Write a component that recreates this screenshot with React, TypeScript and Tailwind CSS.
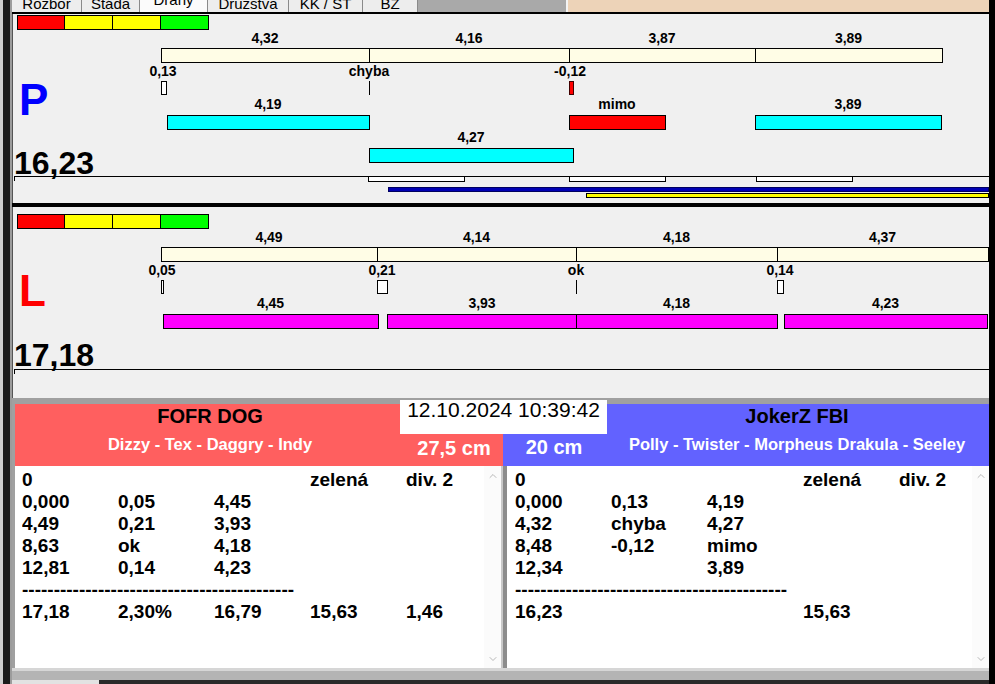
import React from "react";
import { ChevronUp, ChevronDown } from "lucide-react";

// page x of the lane panel's inner left edge
const OX = 13;

type Seg = [number, number];
type Label = { x: number; text: string };
type Marker = { x1: number; x2: number; kind: "box" | "line" | "red" };
type Run = { x1: number; x2: number; color: string; label: string; top: number };

interface Lane {
  letter: string;
  letterColor: string;
  total: string;
  dy: number;
  cream: Seg[];
  creamLabels: string[];
  passLabels: Label[];
  markers: Marker[];
  runs: Run[];
  letterTop: number;
  totalTop: number;
  extras: boolean;
}

const lanes: Lane[] = [
  {
    letter: "P",
    letterColor: "#0000ff",
    total: "16,23",
    dy: 0,
    cream: [
      [161, 369],
      [369, 569],
      [569, 755],
      [755, 942],
    ],
    creamLabels: ["4,32", "4,16", "3,87", "3,89"],
    passLabels: [
      { x: 163, text: "0,13" },
      { x: 369, text: "chyba" },
      { x: 570, text: "-0,12" },
    ],
    markers: [
      { x1: 161, x2: 167, kind: "box" },
      { x1: 369, x2: 370, kind: "line" },
      { x1: 569, x2: 574, kind: "red" },
    ],
    runs: [
      { x1: 167, x2: 369, color: "bg-[#00ffff]", label: "4,19", top: 101 },
      { x1: 569, x2: 665, color: "bg-[#ff0000]", label: "mimo", top: 101 },
      { x1: 755, x2: 941, color: "bg-[#00ffff]", label: "3,89", top: 101 },
      { x1: 369, x2: 573, color: "bg-[#00ffff]", label: "4,27", top: 134 },
    ],
    letterTop: 64,
    totalTop: 133,
    extras: true,
  },
  {
    letter: "L",
    letterColor: "#ff0000",
    total: "17,18",
    dy: 6,
    cream: [
      [161, 377],
      [377, 576],
      [576, 777],
      [777, 988],
    ],
    creamLabels: ["4,49", "4,14", "4,18", "4,37"],
    passLabels: [
      { x: 162, text: "0,05" },
      { x: 382, text: "0,21" },
      { x: 576, text: "ok" },
      { x: 780, text: "0,14" },
    ],
    markers: [
      { x1: 161, x2: 164, kind: "box" },
      { x1: 377, x2: 388, kind: "box" },
      { x1: 576, x2: 577, kind: "line" },
      { x1: 777, x2: 784, kind: "box" },
    ],
    runs: [
      { x1: 163, x2: 378, color: "bg-[#ff00ff]", label: "4,45", top: 101 },
      { x1: 387, x2: 577, color: "bg-[#ff00ff]", label: "3,93", top: 101 },
      { x1: 576, x2: 777, color: "bg-[#ff00ff]", label: "4,18", top: 101 },
      { x1: 784, x2: 987, color: "bg-[#ff00ff]", label: "4,23", top: 101 },
    ],
    letterTop: 62,
    totalTop: 132,
    extras: false,
  },
];

function SmallLabel({ x, center, text }: { x: number; center: number; text: string }) {
  return (
    <div
      className="absolute -translate-x-1/2 whitespace-nowrap text-[14px] font-bold leading-[14px] text-black"
      style={{ left: x - OX, top: center - 7 }}
    >
      {text}
    </div>
  );
}

function LanePanel({ lane, height }: { lane: Lane; height: number }) {
  const d = lane.dy;
  return (
    <div className="relative border-l border-[#555555] bg-[#f0f0f0]" style={{ height }}>
      {/* traffic light bar */}
      <div className="absolute left-[4px] flex border border-black" style={{ top: 1 + d }}>
        <div className="h-[13px] w-[47px] border-r border-black bg-[#ff0000]" />
        <div className="h-[13px] w-[48px] border-r border-black bg-[#ffff00]" />
        <div className="h-[13px] w-[48px] border-r border-black bg-[#ffff00]" />
        <div className="h-[13px] w-[47px] bg-[#00ff00]" />
      </div>

      {/* split times */}
      {lane.cream.map(([a, b], i) => (
        <React.Fragment key={"c" + i}>
          <div
            className="absolute h-[15px] border border-black bg-[#fffde6]"
            style={{ left: a - OX, width: b - a + 1, top: 34 + d }}
          />
          <SmallLabel x={(a + b) / 2} center={24 + d} text={lane.creamLabels[i]} />
        </React.Fragment>
      ))}

      {/* passes */}
      {lane.passLabels.map((l, i) => (
        <SmallLabel key={"p" + i} x={l.x} center={57 + d} text={l.text} />
      ))}
      {lane.markers.map((m, i) =>
        m.kind === "line" ? (
          <div
            key={"m" + i}
            className="absolute h-[14px] w-px bg-black"
            style={{ left: m.x1 - OX, top: 67 + d }}
          />
        ) : (
          <div
            key={"m" + i}
            className={`absolute h-[14px] border ${
              m.kind === "red" ? "border-[#400000] bg-[#ff0000]" : "border-black bg-white"
            }`}
            style={{ left: m.x1 - OX, width: m.x2 - m.x1, top: 67 + d }}
          />
        )
      )}

      {/* dog runs */}
      {lane.runs.map((r, i) => (
        <React.Fragment key={"r" + i}>
          <div
            className={`absolute h-[15px] border border-black ${r.color}`}
            style={{ left: r.x1 - OX, width: r.x2 - r.x1 + 1, top: r.top + d }}
          />
          <SmallLabel x={(r.x1 + r.x2) / 2} center={r.top + d - 11} text={r.label} />
        </React.Fragment>
      ))}

      <div
        className="absolute left-[6px] text-[44px] font-bold leading-none"
        style={{ top: lane.letterTop, color: lane.letterColor }}
      >
        {lane.letter}
      </div>
      <div className="absolute left-[1px] text-[32px] font-bold leading-none text-black" style={{ top: lane.totalTop }}>
        {lane.total}
      </div>

      {/* time line */}
      <div className="absolute left-[1px] right-0 top-[162px] h-px bg-black" />
      <div className="absolute left-[1px] top-[162px] h-[5px] w-px bg-black" />

      {lane.extras && (
        <>
          {[
            [368, 464],
            [569, 665],
            [756, 852],
          ].map(([a, b], i) => (
            <div
              key={"w" + i}
              className="absolute h-[6px] border border-black bg-white"
              style={{ left: a - OX, width: b - a + 1, top: 162 }}
            />
          ))}
          <div className="absolute right-0 top-[173px] h-[5px] border border-[#000060] bg-[#0000b4]" style={{ left: 388 - OX }} />
          <div className="absolute right-0 top-[179px] h-[5px] border border-black bg-[#ffff00]" style={{ left: 586 - OX }} />
        </>
      )}
    </div>
  );
}

function Tabs() {
  const tabs = [
    { t: "Rozbor", w: 70 },
    { t: "Stáda", w: 58 },
    { t: "Dráhy", w: 68, active: true },
    { t: "Družstva", w: 81 },
    { t: "KK / ST", w: 74 },
    { t: "BZ", w: 55 },
  ];
  return (
    <div className="flex h-[12px] overflow-hidden">
      {tabs.map((tab) => (
        <div
          key={tab.t}
          className={`relative h-[12px] overflow-hidden border-r border-[#8a8a8a] text-center text-[15px] leading-none text-black ${
            tab.active ? "bg-[#fbfbfb]" : "bg-[#ededed]"
          }`}
          style={{ width: tab.w }}
        >
          <span className={`relative ${tab.active ? "top-[-8px]" : "top-[-4px]"}`}>{tab.t}</span>
        </div>
      ))}
      <div className="h-[12px] w-[148px] bg-[#a9a9a9]" />
      <div className="h-[12px] w-[2px] bg-[#f4f4f4]" />
      <div className="h-[12px] flex-1 bg-[#edd3b8]" />
    </div>
  );
}

const leftRows: string[][] = [
  ["0", "", "", "zelená", "div. 2"],
  ["0,000", "0,05", "4,45"],
  ["4,49", "0,21", "3,93"],
  ["8,63", "ok", "4,18"],
  ["12,81", "0,14", "4,23"],
  ["-"],
  ["17,18", "2,30%", "16,79", "15,63", "1,46"],
];

const rightRows: string[][] = [
  ["0", "", "", "zelená", "div. 2"],
  ["0,000", "0,13", "4,19"],
  ["4,32", "chyba", "4,27"],
  ["8,48", "-0,12", "mimo"],
  ["12,34", "", "3,89"],
  ["-"],
  ["16,23", "", "", "15,63"],
];

const DASHES = "-------------------------------------------";

function ListBox({ rows, className }: { rows: string[][]; className: string }) {
  return (
    <div className={`flex h-full bg-white ${className}`}>
      <div className="min-w-0 flex-1 overflow-hidden pt-[3px] text-[19px] font-bold leading-[22px] text-black">
        {rows.map((row, i) =>
          row[0] === "-" ? (
            <div key={i} className="h-[22px] overflow-hidden whitespace-nowrap">
              {DASHES}
            </div>
          ) : (
            <div key={i} className="grid h-[22px] grid-cols-[96px_96px_96px_96px_1fr] whitespace-nowrap">
              {[0, 1, 2, 3, 4].map((c) => (
                <span key={c}>{row[c] ?? ""}</span>
              ))}
            </div>
          )
        )}
      </div>
      <div className="flex w-[17px] shrink-0 flex-col items-center justify-between bg-[#fbfbfb] pb-[3px] pt-[4px] text-[#b8b8b8]">
        <ChevronUp size={12} strokeWidth={2} />
        <ChevronDown size={12} strokeWidth={2} />
      </div>
    </div>
  );
}

export default function App() {
  return (
    <div className="flex h-[684px] w-[995px] overflow-hidden bg-[#a0a0a0] font-['Liberation_Sans',Arial,sans-serif]">
      {/* window edge on the left */}
      <div className="flex h-full w-[12px]">
        <div className="h-full w-[3px] bg-[#cfcfcf]" />
        <div className="h-full w-[7px] bg-[#1b1b1b]" />
        <div className="h-full w-[2px] bg-[#9c9c9c]" />
      </div>

      <div className="flex w-[977px] flex-col">
        <Tabs />
        <div className="h-[2px] bg-black" />
        <LanePanel lane={lanes[0]} height={189} />
        <div className="h-[4px] bg-black" />
        <LanePanel lane={lanes[1]} height={191} />
        <div className="h-[6px] bg-[#a0a0a0]" />

        {/* team headers */}
        <div className="relative flex h-[62px] bg-[#a0a0a0] pl-[3px]">
          <div className="flex w-[488px] bg-[#ff5f5f]">
            <div className="flex w-[390px] flex-col items-center">
              <div className="pt-[1px] text-[20px] font-bold leading-[22px] text-black">FOFR DOG</div>
              <div className="pt-[7px] text-[16.5px] font-bold leading-[20px] text-white">Dizzy - Tex - Daggry - Indy</div>
            </div>
            <div className="flex flex-1 justify-center pt-[33px] text-[20px] font-bold leading-[22px] text-white">27,5 cm</div>
          </div>
          <div className="flex flex-1 bg-[#6262ff]">
            <div className="flex w-[102px] justify-center pt-[32px] text-[20px] font-bold leading-[22px] text-white">20 cm</div>
            <div className="flex flex-1 flex-col items-center">
              <div className="pt-[1px] text-[20px] font-bold leading-[22px] text-black">JokerZ FBI</div>
              <div className="pt-[7px] text-[16.5px] font-bold leading-[20px] text-white">
                Polly - Twister - Morpheus Drakula - Seeley
              </div>
            </div>
          </div>
          <div className="absolute left-[388px] top-[-4px] h-[34px] w-[207px] bg-white text-center text-[21px] leading-[20px] text-black">
            12.10.2024 10:39:42
          </div>
        </div>

        {/* run lists */}
        <div className="flex h-[202px] pl-[3px]">
          <div className="w-[486px]">
            <ListBox rows={leftRows} className="pl-[7px]" />
          </div>
          <div className="flex w-[6px]">
            <div className="w-[2px] bg-[#c8c8c8]" />
            <div className="w-[4px] bg-[#8c8c8c]" />
          </div>
          <div className="min-w-0 flex-1">
            <ListBox rows={rightRows} className="pl-[8px]" />
          </div>
        </div>

        {/* bottom frame */}
        <div className="flex h-[16px] flex-col">
          <div className="h-[3px] bg-[#d6d6d6]" />
          <div className="h-[9px] bg-[#b4b4b4]" />
          <div className="flex h-[4px]">
            <div className="w-[87px] bg-[#e2e2e2]" />
            <div className="flex-1 bg-[#2a2a2a]" />
          </div>
        </div>
      </div>

      <div className="h-full w-[6px] bg-black" />
    </div>
  );
}
